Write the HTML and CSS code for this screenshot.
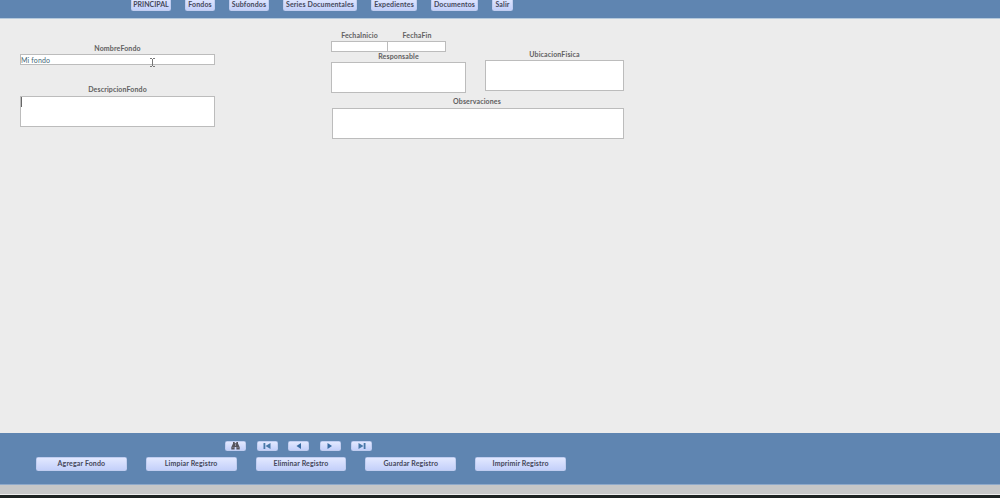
FILE: index.html
```html
<!DOCTYPE html>
<html lang="es">

<head>
  <meta charset="utf-8">
  <title>Fondos</title>
  <link rel="stylesheet" href="styles.css">
</head>

<body>
  <div class="container">
    <header class="menu">
      <button type="button" class="button w-principal">PRINCIPAL</button>
      <button type="button" class="button w-fondos">Fondos</button>
      <button type="button" class="button w-subfondos">Subfondos</button>
      <button type="button" class="button w-series">Series Documentales</button>
      <button type="button" class="button w-expedientes">Expedientes</button>
      <button type="button" class="button w-documentos">Documentos</button>
      <button type="button" class="button w-salir">Salir</button>
    </header>

    <main class="form">
      <div class="column-left">
        <div class="field">
          <span class="label">NombreFondo</span>
          <div class="box line"><span class="value">Mi fondo</span>
            <svg class="pointer" width="5" height="9" viewBox="0 0 5 9"><path d="M0 .5h2M3 .5h2M2.5 1v7M0 8.5h2M3 8.5h2" fill="none" stroke="#777"/></svg>
          </div>
        </div>
        <div class="field descripcion">
          <span class="label">DescripcionFondo</span>
          <div class="box area"><span class="caret"></span></div>
        </div>
      </div>

      <div class="column-right">
        <div class="row">
          <div class="group">
            <div class="dates">
              <div class="field">
                <span class="label">FechaInicio</span>
                <div class="box line date-start"></div>
              </div>
              <div class="field">
                <span class="label">FechaFin</span>
                <div class="box line date-end"></div>
              </div>
            </div>
            <div class="field responsable">
              <span class="label">Responsable</span>
              <div class="box area"></div>
            </div>
          </div>
          <div class="field ubicacion">
            <span class="label">UbicacionFisica</span>
            <div class="box area"></div>
          </div>
        </div>
        <div class="field observaciones">
          <span class="label">Observaciones</span>
          <div class="box area"></div>
        </div>
      </div>
    </main>

    <footer class="footer">
      <div class="records">
        <button type="button" class="button icon" aria-label="Buscar">
          <svg width="9" height="8" viewBox="0 0 9 8"><path d="M2 0h1.7v1.3h1.6V0H7v1.5l1.7 3.8v2.2H5.4V5H3.6v2.5H.3V5.3L2 1.5z" fill="#55535c"/><path d="M1.5 5.5h1M6.5 5.5h1M4.5 2v2" stroke="#a9a9bb" stroke-width=".7"/></svg>
        </button>
        <button type="button" class="button icon" aria-label="Primero">
          <svg width="8" height="6" viewBox="0 0 8 6"><path d="M.5 0h1.8v6H.5zM7.5 0v6L2.5 3z" fill="#4878a8"/></svg>
        </button>
        <button type="button" class="button icon" aria-label="Anterior">
          <svg width="8" height="6" viewBox="0 0 8 6"><path d="M6 0v6L1.5 3z" fill="#386ba2"/></svg>
        </button>
        <button type="button" class="button icon" aria-label="Siguiente">
          <svg width="8" height="6" viewBox="0 0 8 6"><path d="M1.5 0v6L6 3z" fill="#386ba2"/></svg>
        </button>
        <button type="button" class="button icon" aria-label="Ultimo">
          <svg width="8" height="6" viewBox="0 0 8 6"><path d="M7.5 0H5.7v6h1.8zM.5 0v6l5-3z" fill="#4878a8"/></svg>
        </button>
      </div>
      <div class="actions">
        <button type="button" class="button action">Agregar Fondo</button>
        <button type="button" class="button action">Limpiar Registro</button>
        <button type="button" class="button action">Eliminar Registro</button>
        <button type="button" class="button action">Guardar Registro</button>
        <button type="button" class="button action">Imprimir Registro</button>
      </div>
    </footer>
    <div class="status"></div>
    <div class="taskbar"></div>
  </div>
</body>

</html>
```
FILE: styles.css
```css
* {
  box-sizing: border-box;
}

body {
  margin: 0;
  font-family: Lato, "Open Sans", sans-serif;
  font-size: 7px;
  letter-spacing: 0.14px;
  color: #606060;
}

/* Container */
.container {
  display: flex;
  flex-direction: column;
  height: 498px;
  background-color: #ececec;
  overflow: hidden;
}

/* Buttons */
.button {
  display: flex;
  align-items: center;
  justify-content: center;
  padding: 0;
  border: 1px solid #c0cdf0;
  border-radius: 1.5px;
  background: linear-gradient(#e2e8ff, #c4d0fa);
  font-family: inherit;
  font-size: 7px;
  font-weight: bold;
  line-height: 9px;
  letter-spacing: 0.14px;
  color: #44475a;
  white-space: nowrap;
}

/* Top menu */
.menu {
  display: flex;
  gap: 14px;
  height: 19px;
  padding-left: 131px;
  background-color: #5f85b1;
  border-bottom: 1px solid #b5c9dc;
}

.menu .button {
  height: 14px;
  margin-top: -3px;
}

.menu .w-principal {
  width: 40px;
  letter-spacing: 0;
}

.w-fondos {
  width: 30px;
}

.w-subfondos {
  width: 40px;
}

.w-series {
  width: 74px;
}

.w-expedientes {
  width: 46px;
}

.w-documentos {
  width: 47px;
}

.w-salir {
  width: 21px;
}

/* Form */
.form {
  display: flex;
  flex: 1;
  gap: 116px;
  padding-left: 20px;
}

.field {
  display: flex;
  flex-direction: column;
}

.label {
  height: 12px;
  line-height: 13px;
  font-weight: bold;
  text-align: center;
}

.box {
  background-color: #fff;
  border: 1px solid #bcbcbc;
}

.line {
  height: 11px;
}

.area {
  height: 31px;
}

.column-left {
  width: 195px;
  padding-top: 23px;
}

.column-left .box {
  position: relative;
}

.value {
  display: block;
  line-height: 10px;
  color: #446675;
}

.pointer {
  position: absolute;
  left: 129px;
  top: 3px;
}

.caret {
  display: block;
  width: 1px;
  height: 10px;
  background-color: #666;
}

.descripcion {
  margin-top: 19px;
}

.descripcion .label {
  line-height: 11px;
}

/* Right column */
.column-right {
  width: 293px;
  padding-top: 10px;
}

.row {
  display: flex;
  gap: 19px;
}

.group {
  width: 135px;
}

.dates {
  display: flex;
}

.date-start {
  width: 57px;
}

.date-end {
  width: 58px;
  border-left: none;
}

.responsable {
  margin-top: -1px;
}

.responsable .label {
  height: 11px;
  line-height: 11px;
}

.ubicacion {
  width: 139px;
  margin-top: 19px;
}

.observaciones {
  margin: 2px 0 0 1px;
}

.observaciones .label {
  height: 13px;
  padding-right: 2px;
}

/* Footer */
.footer {
  height: 52px;
  padding-top: 8px;
  background-color: #5f85b1;
  border-bottom: 1px solid #8ea9ca;
}

.records {
  display: flex;
  gap: 10.5px;
  padding-left: 225px;
}

.icon {
  width: 21px;
  height: 10px;
}

.actions {
  display: flex;
  gap: 19px;
  margin-top: 6px;
  padding-left: 36px;
}

.action {
  width: 90.8px;
  height: 14px;
  padding-bottom: 1px;
}

/* Bottom strips */
.status {
  height: 10px;
  background-color: #c6c7c8;
  border-bottom: 1px solid #eee;
}

.taskbar {
  height: 3px;
  background-color: #1c2222;
}
```
